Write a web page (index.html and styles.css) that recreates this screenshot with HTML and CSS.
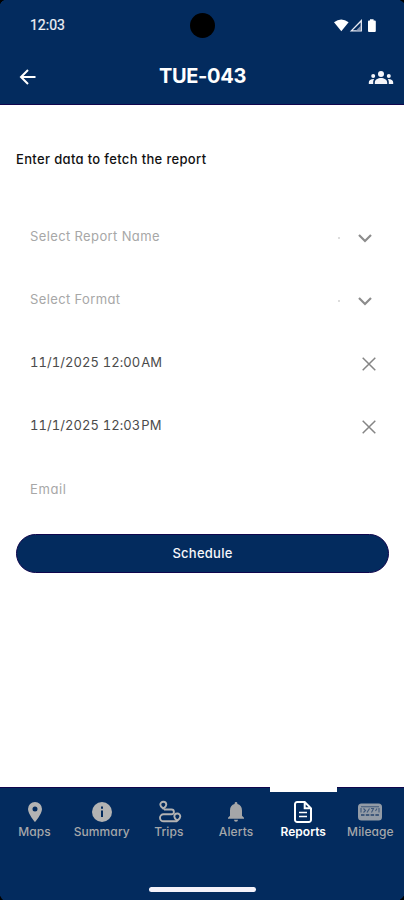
FILE: index.html
```html
<!DOCTYPE html>
<html lang="en">
<head>
<meta charset="utf-8">
<title>TUE-043</title>
<link rel="stylesheet" href="styles.css">
</head>
<body>
<div class="screen">
  <header class="top">
    <div class="status">
      <span class="clock">12:03</span>
      <span class="camera"></span>
      <svg class="signals" width="44" height="16" viewBox="0 0 44 16">
        <path d="M0 4.2Q7.2-1.2 14.600 4.200L7.300 13.200Z" fill="#fff"/>
        <path d="M17.300 12.900L27.300 2.700V12.900Z" fill="none" stroke="#e9ebf3" stroke-width="1.300"/>
        <path d="M22 12.500L27 7.500V12.500Z" fill="#8492ae"/>
        <path d="M36 1.200h3.600v1.300h1.200q1 0 1 1V13q0 1-1 1H35q-1 0-1-1V3.500q0-1 1-1h1z" fill="#fff"/>
      </svg>
    </div>
    <div class="appbar">
      <svg class="back" width="18" height="18" viewBox="0 0 18 18"><path d="M16.500 9H2.500M9 2L2 9l7 7" fill="none" stroke="#fff" stroke-width="2"/></svg>
      <h1>TUE-043</h1>
      <svg class="people" width="26" height="16" viewBox="0 0 26 16" fill="#f4f5fa">
        <circle cx="13" cy="4" r="3"/><circle cx="5.200" cy="6" r="2"/><circle cx="20.800" cy="6" r="2"/>
        <path d="M6.800 14v-1.600C6.800 9.800 10 8 13 8s6.200 1.800 6.200 4.400V14zM.8 14v-1.500c0-2.200 2-3.500 5.400-3.400-.7.800-1 2.100-1 3.100V14zM25.200 14v-1.500c0-2.200-2-3.500-5.400-3.400.7.800 1 2.100 1 3.100V14z"/>
      </svg>
    </div>
  </header>
  <main>
    <h2>Enter data to fetch the report</h2>
    <form>
      <div class="field hint"><span>Select Report Name</span><i class="dot"></i><svg class="chev" width="16" height="10" viewBox="0 0 16 10"><path d="M2 2l6 6 6-6"/></svg></div>
      <div class="field hint"><span>Select Format</span><i class="dot"></i><svg class="chev" width="16" height="10" viewBox="0 0 16 10"><path d="M2 2l6 6 6-6"/></svg></div>
      <div class="field date"><span>11/1/2025 12:00<b>AM</b></span><svg class="clear" width="16" height="16" viewBox="0 0 16 16"><path d="M1.700 1.700l12.600 12.600M14.300 1.700L1.700 14.300"/></svg></div>
      <div class="field date"><span>11/1/2025 12:03<b>PM</b></span><svg class="clear" width="16" height="16" viewBox="0 0 16 16"><path d="M1.700 1.700l12.600 12.600M14.300 1.700L1.700 14.300"/></svg></div>
      <div class="field hint email"><span>Email</span></div>
      <button type="button">Schedule</button>
    </form>
  </main>
  <nav>
    <a><svg width="26" height="24" viewBox="0 0 26 24"><path d="M13 2a7 7 0 0 0-7 7c0 5 7 13 7 13s7-8 7-13a7 7 0 0 0-7-7zm0 4.600a2.500 2.500 0 1 1 0 5 2.500 2.500 0 0 1 0-5z" fill="#b3b3b3"/></svg><span>Maps</span></a>
    <a><svg width="26" height="24" viewBox="0 0 26 24"><circle cx="13" cy="12" r="10" fill="#b3b3b3"/><path d="M13 6.500v2.200M13 10.500v6.500" stroke="#032b5e" stroke-width="2"/></svg><span>Summary</span></a>
    <a><svg width="26" height="24" viewBox="0 0 26 24" fill="none" stroke="#b3b3b3" stroke-width="1.900"><path d="M7.300 8.600S4.300 6.500 4.300 4.800a3 3 0 0 1 6 0C10.300 6.500 7.300 8.600 7.300 8.600zM21.300 20.800s-3-2.400-3-4.300a3 3 0 0 1 6 0c0 1.900-3 4.300-3 4.300z"/><path d="M8 9.500h7.500a2.400 2.400 0 0 1 0 4.800H7.500a3.500 3.500 0 0 0 0 7h13.500"/></svg><span>Trips</span></a>
    <a><svg width="26" height="24" viewBox="0 0 26 24" fill="#a5a6a8"><path d="M21 18.700v-1l-2-2V10.500c0-3.400-1.700-5.700-4.600-6.400v-.6a1.400 1.400 0 0 0-2.800 0v.6C8.700 4.800 7 7.100 7 10.500v5.200l-2 2v1zM11 19.700a2 2 0 0 0 4 0z"/></svg><span>Alerts</span></a>
    <a class="active"><svg width="26" height="24" viewBox="0 0 26 24" fill="none" stroke="#fff" stroke-width="2"><path d="M14.700 2H7.200A2.200 2.200 0 0 0 5 4.200v15.600A2.200 2.200 0 0 0 7.200 22h11.600a2.200 2.200 0 0 0 2.200-2.200V8.300zM14.700 2v6.300H21"/><path d="M9 12.500h8M9 16.500h8" stroke-width="1.700"/></svg><span>Reports</span></a>
    <a><svg width="26" height="24" viewBox="0 0 26 24"><rect x="1" y="3.500" width="24" height="17" rx="3.500" fill="#929ba6"/><g fill="none" stroke="#3f587a" stroke-width="1.100"><path d="M4 6.700h18M4 8v4.500M6.500 8.500l2 2-2 2M10 12.500l2.500-4M14 8.500h2.500l-2 4M18.500 11l1.500-2.500M22 8v4.500"/><path d="M4 15h18" stroke-width="2" stroke-dasharray="3.500 1.300"/></g></svg><span>Mileage</span></a>
    <div class="home"></div>
  </nav>
</div>
</body>
</html>
```

FILE: styles.css
```css
* { box-sizing: border-box; }
body { margin: 0; background: #000; font-family: Inter, "Liberation Sans", sans-serif; font-feature-settings: "cv11" 1; }
.screen { width: 404px; height: 900px; display: flex; flex-direction: column; background: #fff; overflow: hidden; }
.top { height: 105px; background: #032b5e; border-bottom: 1px solid #10064d; position: relative; }
.top::before { content: ""; position: absolute; inset: 0; background: radial-gradient(circle at 8px 8px, transparent 8.500px, #000 9px) 0 0 / 6px 6px no-repeat, radial-gradient(circle at -4px 10px, transparent 10px, #000 11px) 100% 0 / 4px 4px no-repeat; }
.status { height: 50px; display: flex; align-items: center; justify-content: space-between; padding: 0 26px 0 30px; position: relative; }
.clock { font: 400 14px Roboto, sans-serif; color: #f0f2f7; width: 44px; -webkit-text-stroke: .2px #f0f2f7; }
.camera { width: 25px; height: 25px; border-radius: 50%; background: #000; margin-right: 4px; }
.signals { margin-top: 1px; }
.appbar { height: 53px; display: flex; align-items: center; justify-content: space-between; padding: 0 10px 0 19px; position: relative; }
.people { margin-top: 2px; }
h1 { margin: 0 0 1px; font-size: 20px; line-height: 24px; font-weight: 700; color: #fff; letter-spacing: -.35px; }
main { flex: 1; padding: 44px 15px 0 16px; }
h2 { margin: 0; font-size: 13px; line-height: 20px; font-weight: 500; color: #111; white-space: nowrap; letter-spacing: .34px; }
form { padding-top: 35px; }
.field { height: 63px; display: flex; align-items: center; padding: 0 12px 0 14px; font-size: 13px; color: #4b4b4b; letter-spacing: .37px; }
.field > span { flex: 1; white-space: nowrap; }
.hint { color: #a7a7a7; }
.date { font-feature-settings: "cv11" 1, "tnum" 1; letter-spacing: .08px; }
.field b { font-weight: 400; margin-left: 1px; }
.dot { width: 2px; height: 2px; background: #ddd; margin: 4px 17px 0 0; }
.chev { margin: 4px 4px 0 0; fill: none; stroke: #8c8c8c; stroke-width: 2.200; }
.clear { margin-top: 4px; fill: none; stroke: #858585; stroke-width: 1.500; }
.email { height: 66px; letter-spacing: .6px; }
button { display: block; width: 100%; height: 39px; margin-top: 12px; padding: 0 0 2px; border: 1px solid #10064d; border-radius: 20px; background: #032b5e; color: #f7f7fb; font: 500 13px Inter, sans-serif; letter-spacing: .25px; font-feature-settings: "cv11" 1; }
nav { height: 113px; background: #032b5e; border-top: 1px solid #10064d; display: grid; grid-template-columns: repeat(6, 1fr); padding-left: 1px; position: relative; }
nav::after { content: ""; position: absolute; inset: auto 0 0 0; height: 4px; background: radial-gradient(circle at 10px -4px, transparent 10px, #000 11px) 0 0 / 5px 4px no-repeat, radial-gradient(circle at -4px -4px, transparent 8px, #000 9px) 100% 0 / 4px 4px no-repeat; }
nav a { display: flex; flex-direction: column; align-items: center; padding-top: 12px; font-size: 12px; line-height: 16px; font-weight: 500; color: #a5a7aa; position: relative; letter-spacing: .1px; }
nav .active { color: #fff; font-weight: 600; letter-spacing: 0; }
.active::before { content: ""; position: absolute; top: -1px; left: 0; right: 0; height: 5px; background: #fff; }
.home { position: absolute; left: 149px; top: 99px; width: 107px; height: 5px; border-radius: 3px; background: #f4f2fa; }
```
